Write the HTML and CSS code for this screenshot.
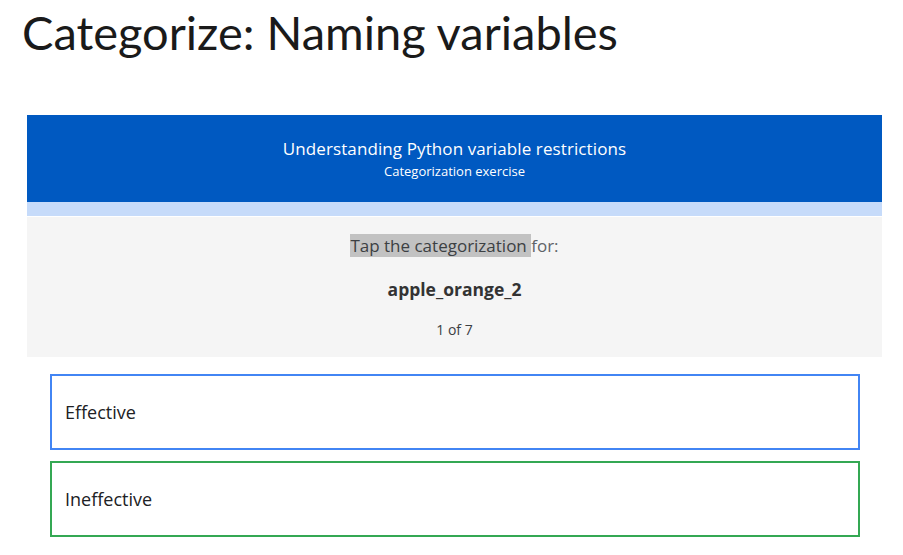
FILE: index.html
```html
<!DOCTYPE html>
<html lang="en">
<head>
<meta charset="utf-8">
<title>Categorize: Naming variables</title>
<link rel="stylesheet" href="styles.css">
</head>
<body>
<h1 class="page-title">Categorize: Naming variables</h1>
<section class="card">
  <header class="card-head">
    <div class="card-title">Understanding Python variable restrictions</div>
    <div class="card-sub">Categorization exercise</div>
  </header>
  <div class="band"></div>
  <div class="prompt">
    <p class="prompt-line"><span class="hl">Tap the categorization </span>for:</p>
    <p class="term">apple_orange_2</p>
    <p class="count">1 of 7</p>
  </div>
</section>
<div class="choices">
  <button class="choice choice-blue">Effective</button>
  <button class="choice choice-green">Ineffective</button>
</div>
</body>
</html>
```
FILE: styles.css
```css
html, body {
  margin: 0;
  padding: 0;
  background: #ffffff;
}
body {
  font-family: "Open Sans", "Roboto", sans-serif;
}
.page-title {
  margin: 0;
  padding: 4px 0 0 22px;
  font-family: "Lato", "Open Sans", sans-serif;
  font-weight: 400;
  font-size: 47px;
  line-height: 56px;
  color: #1a1a1a;
}
.card {
  margin: 55px 21px 0 27px;
}
.card-head {
  height: 87px;
  background: #0059c1;
  color: #ffffff;
  display: flex;
  flex-direction: column;
  align-items: center;
  justify-content: center;
  padding-top: 2px;
  box-sizing: border-box;
}
.card-title {
  font-size: 17px;
  line-height: 22px;
  letter-spacing: 0.1px;
}
.card-sub {
  font-size: 13px;
  line-height: 22px;
}
.band {
  height: 14px;
  background: #c6dbfa;
  border-bottom: 1px solid #ffffff;
}
.prompt {
  background: #f5f5f5;
  height: 140px;
  display: flex;
  flex-direction: column;
  align-items: center;
  padding-top: 16px;
  box-sizing: border-box;
}
.prompt p {
  margin: 0;
}
.prompt-line {
  font-size: 17px;
  line-height: 25px;
  color: #5f6368;
}
.hl {
  background: #c2c2c2;
  color: #3c4043;
}
.term {
  margin-top: 20px !important;
  font-size: 17.5px;
  font-weight: 700;
  line-height: 22px;
  color: #333333;
}
.count {
  margin-top: 21px !important;
  font-size: 14px;
  line-height: 18px;
  color: #3c4043;
}
.choices {
  display: flex;
  flex-direction: column;
  gap: 11px;
  margin: 17px 43px 0 50px;
}
.choice {
  height: 76px;
  background: #ffffff;
  text-align: left;
  padding: 0 0 0 13px;
  font-family: "Open Sans", "Roboto", sans-serif;
  font-size: 18px;
  color: #202124;
  cursor: pointer;
}
.choice-blue {
  border: 2px solid #4285f4;
}
.choice-green {
  border: 2px solid #34a853;
}
```
